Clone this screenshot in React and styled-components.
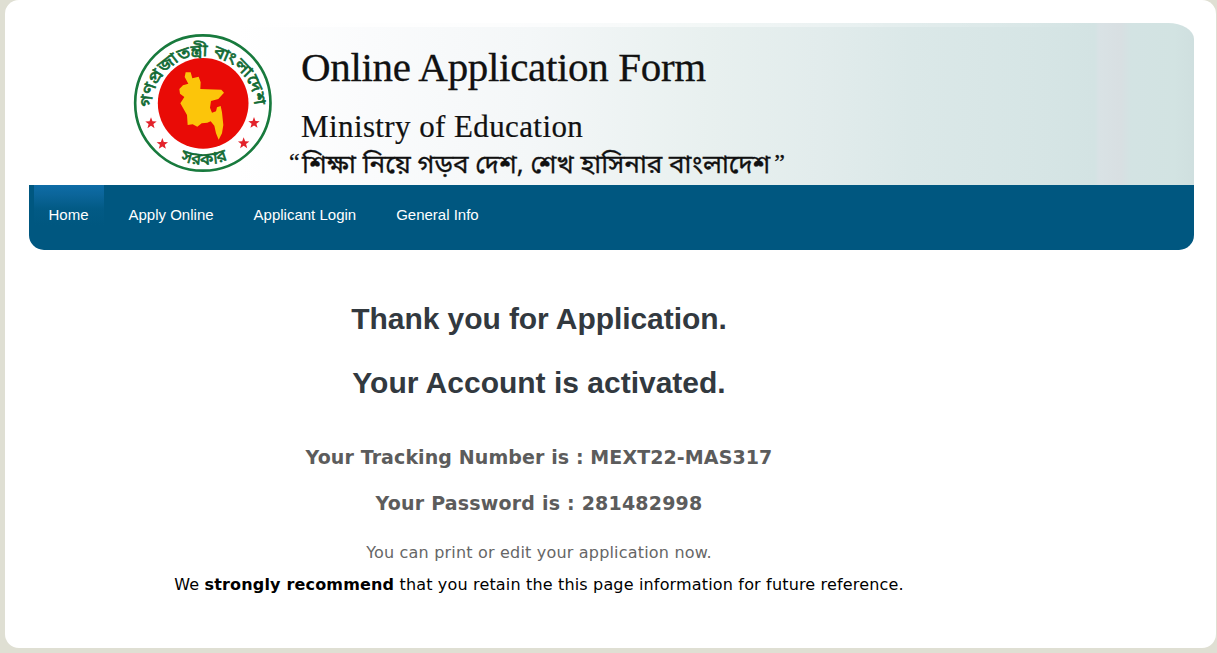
import React from "react";
import styled, { createGlobalStyle } from "styled-components";

const GlobalStyle = createGlobalStyle`
  * { box-sizing: border-box; }
  html, body { margin: 0; height: 100%; overflow: hidden; }
  body { background: #dfdfd3; font-family: "DejaVu Sans", Verdana, sans-serif; }
`;

const Card = styled.div`
  width: 1211px;
  height: 648px;
  margin-left: 5px;
  padding: 23px 22px 0 24px;
  background: #fff;
  border-radius: 14px;
`;

const Banner = styled.header`
  display: flex;
  height: 162px;
  padding: 2px 0 0 91px;
  overflow: hidden;
  border-radius: 0 26px 0 0 / 0 16px 0 0;
  background:
    linear-gradient(to right, #ffffff 0, rgba(255, 255, 255, 0.8) 400px, rgba(255, 255, 255, 0) 1060px) left top / 100% 4px no-repeat,
    linear-gradient(
      to right,
      #ffffff 0,
      #ffffff 210px,
      #fafbfc 340px,
      #f4f7f8 500px,
      #e8f0ef 680px,
      #e2ecec 790px,
      #dbe8e8 880px,
      #d6e5e5 1010px,
      #d3e3e3 1066px,
      #d9e2e5 1070px,
      #d8dfe2 1092px,
      #d3e3e3 1102px,
      #d2e3e2 1145px,
      #cfdfdf 1165px
    );
`;

const Emblem = styled.svg`
  flex: none;
  width: 165px;
  height: 160px;
`;

const Titles = styled.div`
  display: flex;
  flex-direction: column;
  padding-left: 4px;
  color: #111;
  white-space: nowrap;
  font-family: "Liberation Serif", serif;
`;

const SiteTitle = styled.div`
  margin: 18px 0 0 12px;
  font-size: 41px;
  line-height: 48px;
  letter-spacing: -0.32px;
  -webkit-text-stroke: 0.3px #111;
`;

const Ministry = styled.div`
  margin: 18px 0 0 12px;
  font-size: 31px;
  line-height: 36px;
  letter-spacing: 0.4px;
  -webkit-text-stroke: 0.2px #111;
`;

const Slogan = styled.div`
  display: flex;
  margin-top: 4px;
  font-family: "Noto Sans Bengali", "Liberation Serif", serif;
  font-size: 26px;
  line-height: 36px;
  -webkit-text-stroke: 0.3px #111;
`;

const Quote = styled.span`
  width: 13px;
  font-family: "Liberation Serif", serif;
  font-size: 24px;
  line-height: 26px;
  margin-left: ${(p) => (p.$closing ? "4px" : "0")};
`;

const Nav = styled.nav`
  display: flex;
  height: 65px;
  padding-left: 5px;
  background: #005780;
  border-radius: 0 0 15px 15px;
`;

const NavLink = styled.a`
  height: 60px;
  padding: 0 15px 0 14.5px;
  margin-right: 10.5px;
  color: #fff;
  font: 15px/60px "Liberation Sans", Arial, sans-serif;
  text-decoration: none;
  background: ${(p) => (p.$active ? "linear-gradient(#0e6ca6 0, #0b659a 10px, #025a85 24px, #005780 40px)" : "none")};
`;

const Content = styled.main`
  display: flex;
  flex-direction: column;
  align-items: center;
  width: 1020px;
  padding-top: 46px;
  white-space: nowrap;
`;

const Heading = styled.h1`
  margin: 0 0 18px;
  color: #32393f;
  font: bold 30px/46px "Liberation Sans", Arial, sans-serif;
  letter-spacing: ${(p) => p.$tracking || 0}px;
`;

const Credential = styled.h2`
  margin: 0 0 16px;
  color: #5c5c5c;
  font-size: 19px;
  line-height: 30px;
  letter-spacing: ${(p) => p.$tracking}px;
`;

const Credentials = styled.div`
  display: flex;
  flex-direction: column;
  align-items: center;
  padding: 18px 0 3px;
`;

const Note = styled.p`
  margin: 0;
  color: ${(p) => (p.$muted ? "#666" : "#000")};
  font-size: 16px;
  line-height: 32px;
  letter-spacing: ${(p) => (p.$muted ? 0.19 : 0.165)}px;
`;

const NAV = ["Home", "Apply Online", "Applicant Login", "General Info"];
const STARS = [[93, 295], [127, 357], [402, 294], [371, 355]];

function starPoints(cx, cy, r) {
  return Array.from({ length: 10 }, (_, i) => {
    const a = (Math.PI / 5) * i - Math.PI / 2;
    const d = i % 2 ? r * 0.42 : r;
    return `${cx + d * Math.cos(a)},${cy + d * Math.sin(a)}`;
  }).join(" ");
}

function GovernmentEmblem() {
  return (
    <Emblem viewBox="0 0 495 480" role="img">
      <circle cx="248.500" cy="234" r="203" fill="#fff" stroke="#187a3d" strokeWidth="8" />
      <circle cx="249.500" cy="235" r="136" fill="#e90b06" />
      <path
        d="M197 142L212 142L217 160L236 155L242 172L241 192L304 194L312 203L295 222L273 228L270 248L276 263L288 259L291 247L302 243L306 262L310 300L306 325L296 344L288 325L283 302L272 289L262 293L245 295L232 305L218 298L203 300L201 270L181 235L193 216L180 206L178 192L189 181L205 176L194 156Z"
        fill="#fcc50a"
      />
      {STARS.map(([x, y]) => (
        <polygon key={x} points={starPoints(x, y, 18)} fill="#e3222b" />
      ))}
      <path id="upper-arc" d="M95 247A154 154 0 0 1 403 247" fill="none" />
      <path id="lower-arc" d="M120 365A183 183 0 0 0 379 365" fill="none" />
      <g fill="#126b35" stroke="#126b35" strokeWidth="2" fontFamily="'Noto Sans Bengali', sans-serif" fontSize="50">
        <text textLength="478" lengthAdjust="spacingAndGlyphs">
          <textPath href="#upper-arc">গণপ্রজাতন্ত্রী বাংলাদেশ</textPath>
        </text>
        <text>
          <textPath href="#lower-arc" startOffset="51%" textAnchor="middle">সরকার</textPath>
        </text>
      </g>
    </Emblem>
  );
}

export default function App() {
  return (
    <>
      <GlobalStyle />
      <Card>
        <Banner>
          <GovernmentEmblem />
          <Titles>
            <SiteTitle>Online Application Form</SiteTitle>
            <Ministry>Ministry of Education</Ministry>
            <Slogan>
              <Quote>“</Quote>
              শিক্ষা নিয়ে গড়ব দেশ, শেখ হাসিনার বাংলাদেশ
              <Quote $closing>”</Quote>
            </Slogan>
          </Titles>
        </Banner>
        <Nav>
          {NAV.map((label, i) => (
            <NavLink key={label} $active={i === 0}>{label}</NavLink>
          ))}
        </Nav>
        <Content>
          <Heading $tracking={-0.07}>Thank you for Application.</Heading>
          <Heading>Your Account is activated.</Heading>
          <Credentials>
            <Credential $tracking={0.1}>Your Tracking Number is : MEXT22-MAS317</Credential>
            <Credential $tracking={0.2}>Your Password is : 281482998</Credential>
          </Credentials>
          <Note $muted>You can print or edit your application now.</Note>
          <Note>
            We <b>strongly recommend</b> that you retain the this page information for future reference.
          </Note>
        </Content>
      </Card>
    </>
  );
}
